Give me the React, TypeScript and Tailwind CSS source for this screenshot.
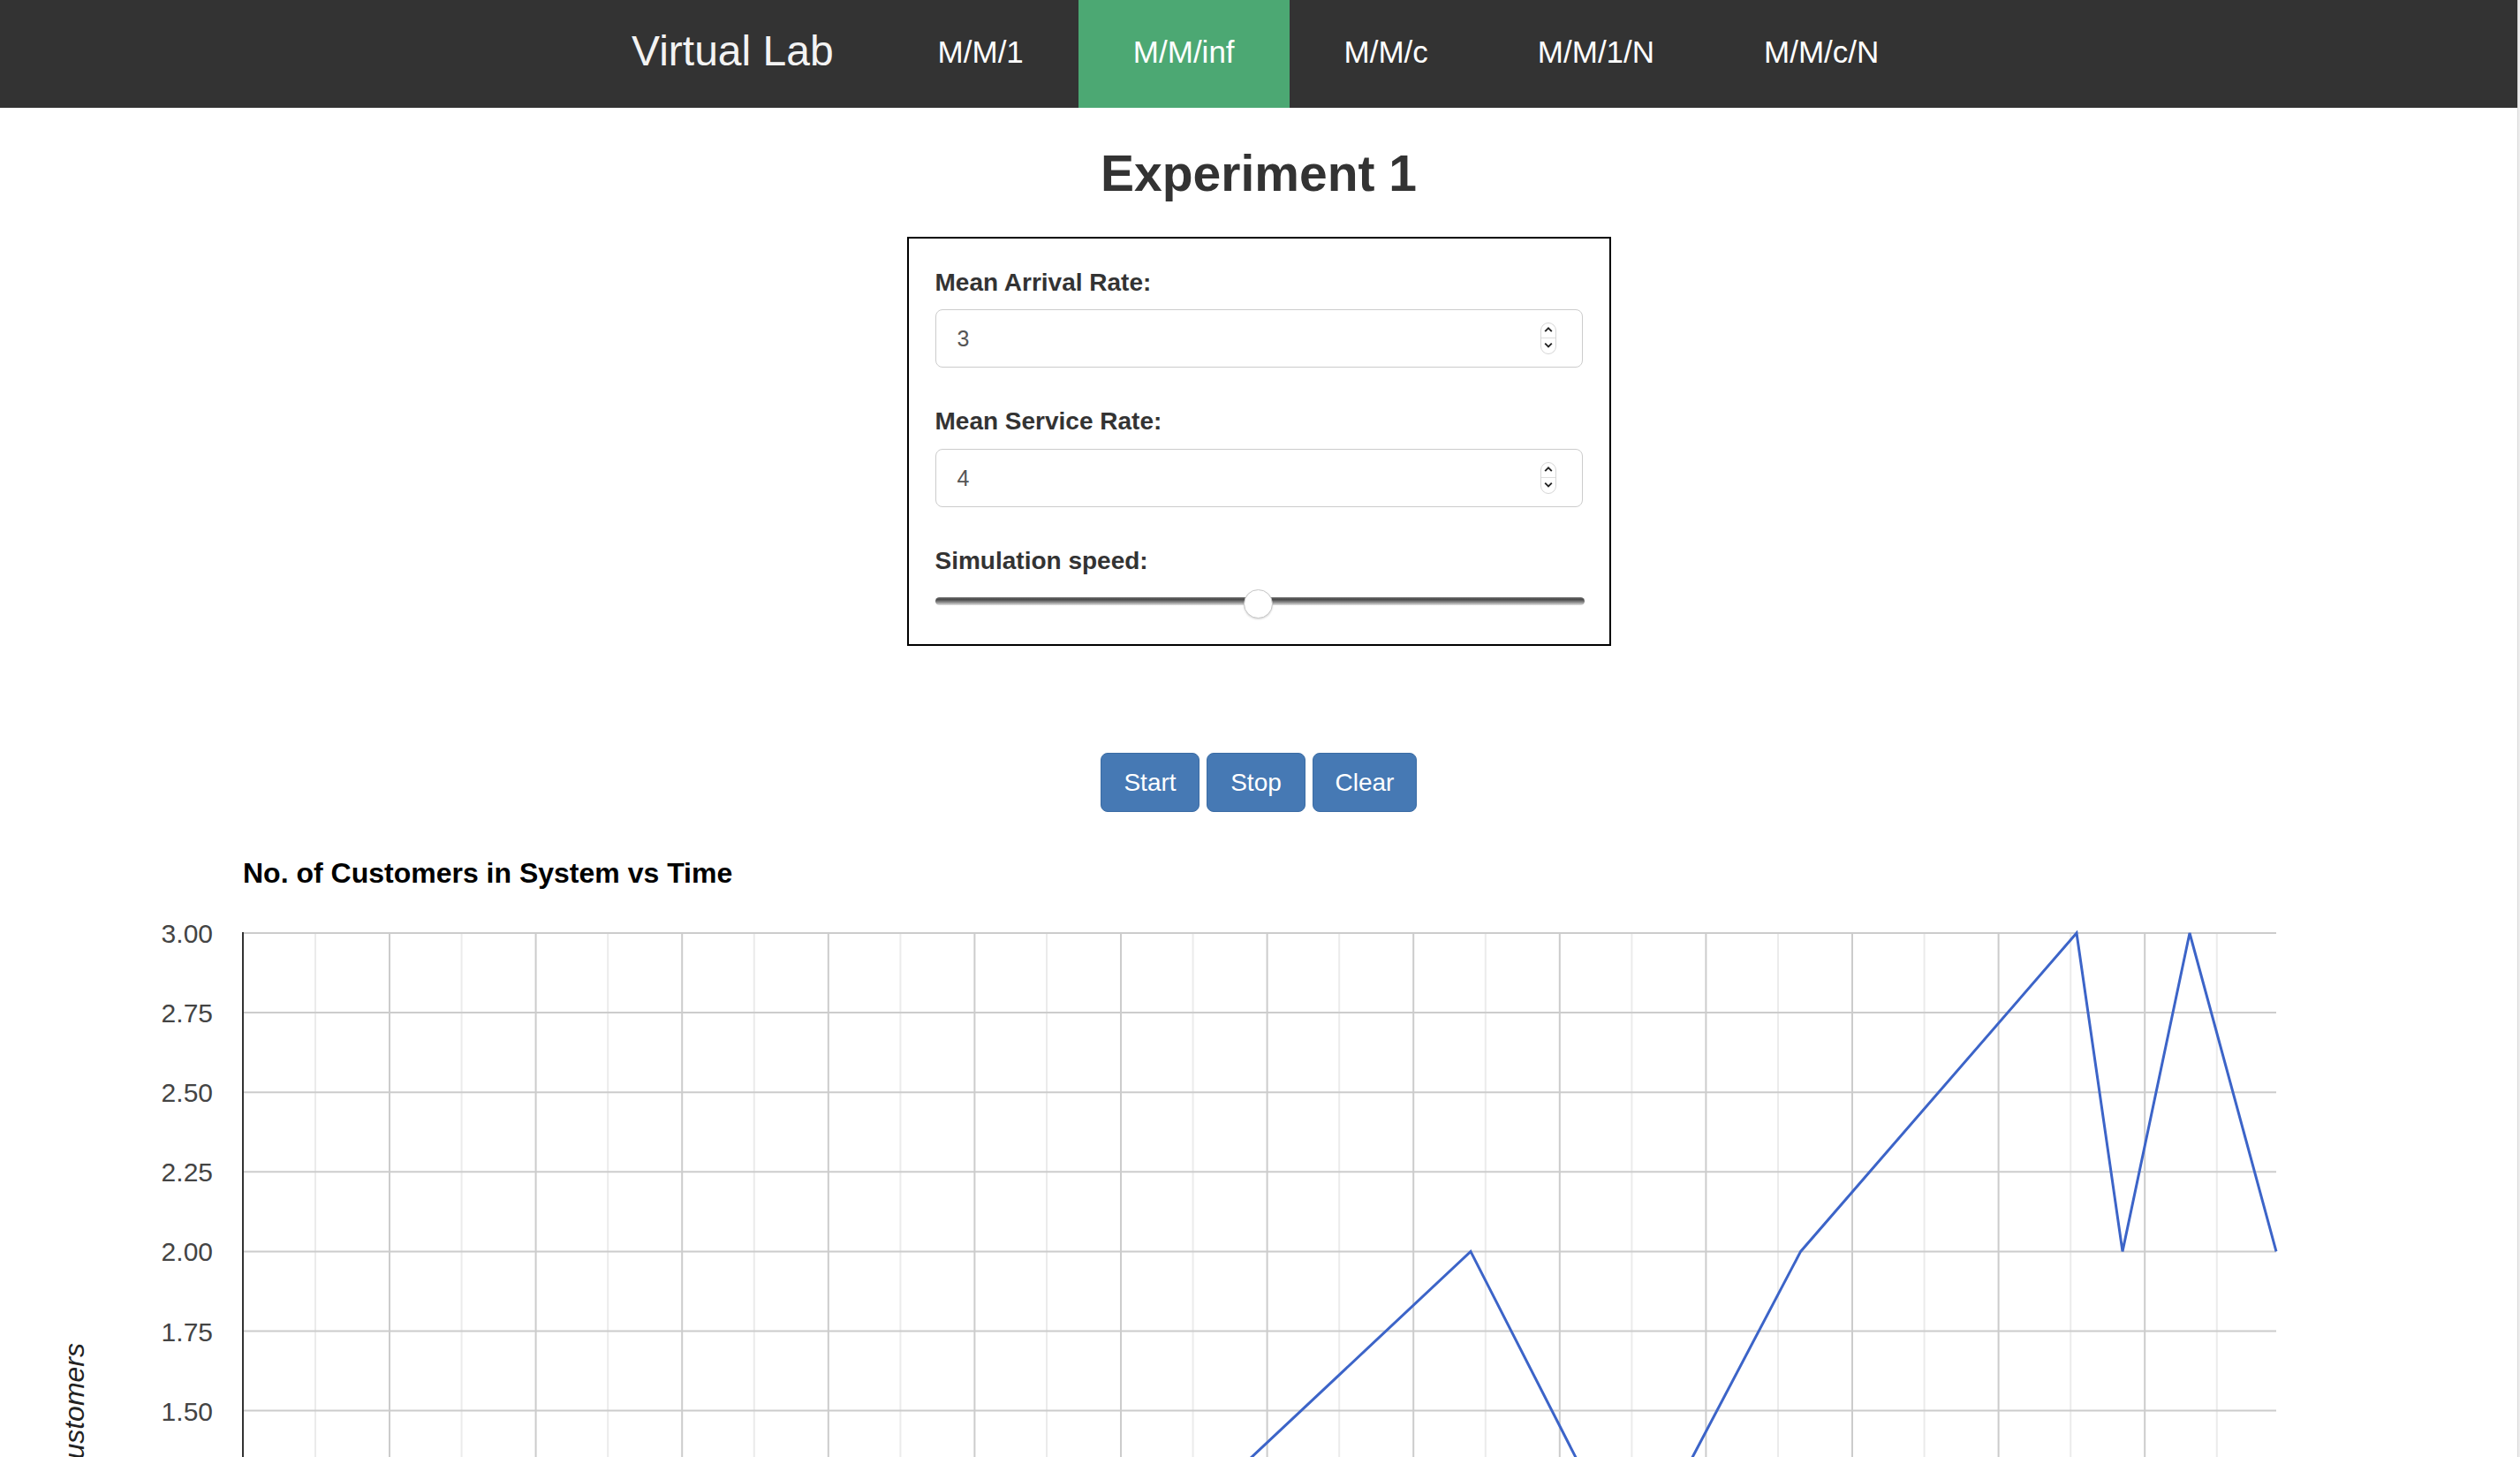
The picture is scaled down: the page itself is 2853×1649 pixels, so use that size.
import React from "react";

const FONT = { fontFamily: '"Liberation Sans", Arial, Helvetica, sans-serif' };

function Spinner() {
  return (
    <svg width="18" height="36" viewBox="0 0 18 36" className="shrink-0">
      <rect x="0.5" y="0.5" width="17" height="35" rx="8.5" fill="#fff" stroke="#d6d6d6" />
      <line x1="1" y1="17.5" x2="17" y2="17.5" stroke="#dedede" />
      <path d="M5.2 10.2 L9 6.4 L12.8 10.2" stroke="#222" strokeWidth="1.9" fill="none" />
      <path d="M5.2 23.6 L9 27.4 L12.8 23.6" stroke="#222" strokeWidth="1.9" fill="none" />
    </svg>
  );
}

function NumberField({ value }: { value: string }) {
  return (
    <div className="flex h-[66px] items-center justify-between rounded-[8px] border border-[#cccccc] bg-white pl-[24px] pr-[29px]">
      <span className="text-[25px] leading-none text-[#555555]">{value}</span>
      <Spinner />
    </div>
  );
}

function Chart() {
  const T = 1004;
  const top = 1056 - T;
  const unit = 360.4;
  const yOf = (v: number) => top + (3 - v) * unit;
  const H = 900;
  const hVals: number[] = [];
  for (let i = 0; i <= 12; i++) hVals.push(3 - i * 0.25);
  const majors: number[] = [];
  for (let k = 0; k <= 12; k++) majors.push(441 + 165.6 * k);
  const minors: number[] = [];
  for (let k = 0; k <= 13; k++) minors.push(357 + 165.6 * k);
  const data: [number, number][] = [
    [1000, 1.0],
    [1281, 1.0],
    [1665, 2.0],
    [1849, 1.0],
    [2038.6, 2.0],
    [2351, 3.0],
    [2403, 2.0],
    [2479, 3.0],
    [2577, 2.0],
  ];
  const pts = data.map(([x, v]) => `${x},${yOf(v)}`).join(" ");
  return (
    <svg width="2850" height={H} viewBox={`0 0 2850 ${H}`} className="block" style={FONT}>
      {minors.map((x) => (
        <line key={"mi" + x} x1={x} y1={top} x2={x} y2={H} stroke="#ebebeb" strokeWidth="2" />
      ))}
      {majors.map((x) => (
        <line key={"ma" + x} x1={x} y1={top} x2={x} y2={H} stroke="#cccccc" strokeWidth="2" />
      ))}
      {hVals.map((v) => (
        <line key={"h" + v} x1={276} y1={yOf(v)} x2={2577} y2={yOf(v)} stroke="#cccccc" strokeWidth="2" />
      ))}
      <line x1={275} y1={top - 1} x2={275} y2={H} stroke="#333333" strokeWidth="2" />
      <polyline points={pts} fill="none" stroke="#3c64c8" strokeWidth="3" strokeLinejoin="miter" />
      {hVals.map((v) => (
        <text key={"t" + v} x={241} y={yOf(v) + 11} textAnchor="end" fontSize="30" fill="#444444">
          {v.toFixed(2)}
        </text>
      ))}
      <text
        x={95}
        y={516}
        transform="rotate(-90 95 516)"
        textAnchor="end"
        fontSize="32"
        fontStyle="italic"
        fill="#222222"
      >
        No. of Customers
      </text>
    </svg>
  );
}

export default function App() {
  const items = ["M/M/1", "M/M/inf", "M/M/c", "M/M/1/N", "M/M/c/N"];
  return (
    <div className="flex min-h-screen bg-white" style={FONT}>
      <div className="min-w-0 flex-1 overflow-hidden">
        <nav className="flex h-[122px] items-stretch bg-[#333333] pl-[715px]">
          <div className="mr-[56px] flex items-center pb-[6px] text-[48px] leading-none text-[#f3f3f3]">
            Virtual Lab
          </div>
          {items.map((it) => (
            <div
              key={it}
              className={
                it === "M/M/inf"
                  ? "flex items-center bg-[#4ca873] px-[62px] pb-[6px] text-[35px] leading-none text-white"
                  : "flex items-center px-[62px] pb-[6px] text-[35px] leading-none text-white"
              }
            >
              {it}
            </div>
          ))}
        </nav>

        <main className="flex flex-col items-center">
          <h2 className="mt-[46px] text-[57px] font-bold leading-none text-[#333333]">Experiment 1</h2>

          <div className="mt-[43px] w-[797px] border-2 border-black px-[30px] pb-[29px] pt-[36px]">
            <div className="text-[28px] font-bold leading-none text-[#333333]">Mean Arrival Rate:</div>
            <div className="mt-[16px]">
              <NumberField value="3" />
            </div>
            <div className="mt-[47px] text-[28px] font-bold leading-none text-[#333333]">Mean Service Rate:</div>
            <div className="mt-[17px]">
              <NumberField value="4" />
            </div>
            <div className="mt-[47px] text-[28px] font-bold leading-none text-[#333333]">Simulation speed:</div>
            <div className="relative mt-[18px] h-[33px]">
              <div className="absolute left-0 right-[-2px] top-[9px] h-[9px] rounded-full bg-[linear-gradient(to_bottom,#6c6c6c,#4a4a4a_30%,#9c9c9c_70%,#e4e4e4)]" />
              <div className="absolute left-[349px] top-0 h-[33px] w-[33px] rounded-full border border-[#c6c6c6] bg-white shadow-[0_1px_2px_rgba(0,0,0,0.15)]" />
            </div>
          </div>

          <div className="mt-[121px] flex gap-[8px]">
            <button className="flex h-[67px] w-[112px] items-center justify-center rounded-[8px] border border-[#3b6ca4] bg-[#4679b4] text-[28px] leading-none text-white">
              Start
            </button>
            <button className="flex h-[67px] w-[112px] items-center justify-center rounded-[8px] border border-[#3b6ca4] bg-[#4679b4] text-[28px] leading-none text-white">
              Stop
            </button>
            <button className="flex h-[67px] w-[118px] items-center justify-center rounded-[8px] border border-[#3b6ca4] bg-[#4679b4] text-[28px] leading-none text-white">
              Clear
            </button>
          </div>

          <div className="mt-[53px] w-full">
            <div className="pl-[275px] text-[32px] font-bold leading-none text-black">
              No. of Customers in System vs Time
            </div>
            <Chart />
          </div>
        </main>
      </div>
      <div className="w-[3px] shrink-0 border-l border-[#d9d9d9] bg-[#ececec]" />
    </div>
  );
}
